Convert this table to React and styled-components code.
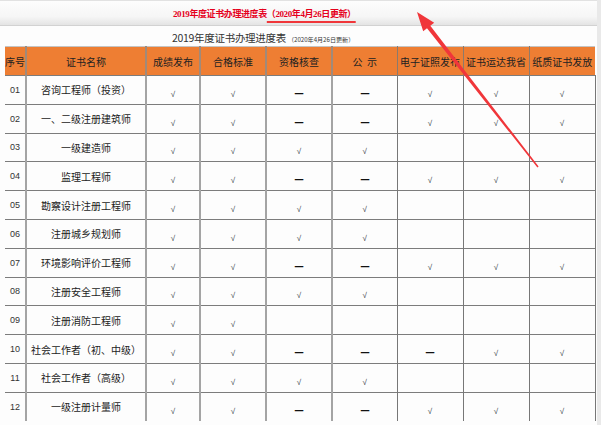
import React from 'react'
import styled, { createGlobalStyle } from 'styled-components'

const GlobalStyle = createGlobalStyle`
  html, body {
    margin: 0;
    padding: 0;
    background: #fff;
  }
  body {
    font-family: "Noto Sans CJK SC", "Liberation Sans", sans-serif;
  }
`

const HEADERS = ['序号', '证书名称', '成绩发布', '合格标准', '资格核查', '公  示', '电子证照发布', '证书运达我省', '纸质证书发放']
const WIDTHS = [21, 120, 54, 66, 66, 65, 66, 66, 66]

const ROWS = [
  ['01', '咨询工程师（投资）', 'v', 'v', '-', '-', 'v', 'v', 'v'],
  ['02', '一、二级注册建筑师', 'v', 'v', '-', '-', 'v', 'v', 'v'],
  ['03', '一级建造师', 'v', 'v', 'v', 'v', '', '', ''],
  ['04', '监理工程师', 'v', 'v', '-', '-', 'v', 'v', 'v'],
  ['05', '勘察设计注册工程师', 'v', 'v', 'v', 'v', '', '', ''],
  ['06', '注册城乡规划师', 'v', 'v', 'v', 'v', '', '', ''],
  ['07', '环境影响评价工程师', 'v', 'v', '-', '-', 'v', 'v', 'v'],
  ['08', '注册安全工程师', 'v', 'v', 'v', 'v', '', '', ''],
  ['09', '注册消防工程师', 'v', 'v', '', '', '', '', ''],
  ['10', '社会工作者（初、中级）', 'v', 'v', '-', '-', '-', 'v', 'v'],
  ['11', '社会工作者（高级）', 'v', 'v', 'v', 'v', '', '', ''],
  ['12', '一级注册计量师', 'v', 'v', '-', '-', 'v', 'v', 'v'],
]

// tapered annotation arrow, tail -> tip
const arrowPoints = (() => {
  const tip = [417, 12]
  const tail = [538, 167]
  const dx = tip[0] - tail[0]
  const dy = tip[1] - tail[1]
  const len = Math.hypot(dx, dy)
  const u = [dx / len, dy / len]
  const n = [-u[1], u[0]]
  const headLen = 19
  const headHalf = 7
  const base = [tip[0] - u[0] * headLen, tip[1] - u[1] * headLen]
  const p = (c, k) => `${(c[0] + n[0] * k).toFixed(1)},${(c[1] + n[1] * k).toFixed(1)}`
  return [
    p(tail, 0.7),
    p(base, 2.1),
    p(base, headHalf),
    `${tip[0]},${tip[1]}`,
    p(base, -headHalf),
    p(base, -2.1),
    p(tail, -0.7),
  ].join(' ')
})()

const Cell = ({ value }) => {
  if (value === 'v') return <Check>√</Check>
  if (value === '-') return <Dash>—</Dash>
  return null
}

export default function App() {
  return (
    <>
      <GlobalStyle />
      <Page>
        <TopBar>
          <Title>
            2019年度证书办理进度表<Updated>（2020年4月26日更新）</Updated>
          </Title>
        </TopBar>
        <Main>
          <Caption>
            <CaptionText>2019年度证书办理进度表</CaptionText>
            <CaptionNote>（2020年4月26日更新）</CaptionNote>
          </Caption>
          <Table>
            <colgroup>
              {WIDTHS.map((w, i) => (
                <col key={i} style={{ width: w }} />
              ))}
            </colgroup>
            <thead>
              <tr>
                {HEADERS.map((h) => (
                  <Th key={h}>{h}</Th>
                ))}
              </tr>
            </thead>
            <tbody>
              {ROWS.map((r) => (
                <Row key={r[0]}>
                  <NumCell>{r[0]}</NumCell>
                  <NameCell>{r[1]}</NameCell>
                  {r.slice(2).map((v, i) => (
                    <Td key={i}>
                      <Cell value={v} />
                    </Td>
                  ))}
                </Row>
              ))}
            </tbody>
          </Table>
        </Main>
        <Arrow viewBox="0 0 601 425" width="601" height="425">
          <polygon points={arrowPoints} fill="#f0363a" />
        </Arrow>
      </Page>
    </>
  )
}

const Page = styled.div`
  position: relative;
  width: 601px;
  height: 425px;
  overflow: hidden;
  background: #fdfdfd;
  box-sizing: border-box;
  border-right: 4px solid #e9e9e9;
`

const TopBar = styled.div`
  height: 24px;
  display: flex;
  align-items: center;
  padding-left: 173px;
  border-top: 1px solid #e2e2e2;
  border-bottom: 1px solid #d2d2d2;
  background: linear-gradient(#fdfdfd, #f6f6f6 65%, #e4e4e4);
`

const Title = styled.div`
  font-family: "Liberation Serif", "Noto Sans CJK SC", serif;
  font-weight: 700;
  font-size: 9px;
  color: #e5001c;
  white-space: nowrap;
  letter-spacing: -0.4px;
  margin-top: 1px;
`

const Updated = styled.span`
  text-decoration: underline;
  text-decoration-color: #f0363a;
  text-decoration-thickness: 2px;
  text-underline-offset: 4px;
`

const Main = styled.div`
  padding: 0 0 0 5px;
`

const Caption = styled.div`
  height: 20px;
  display: flex;
  align-items: flex-end;
  padding-left: 167px;
  box-sizing: border-box;
  padding-bottom: 1px;
  white-space: nowrap;
`

const CaptionText = styled.span`
  font-size: 10.5px;
  color: #333;
  letter-spacing: -0.3px;
`

const CaptionNote = styled.span`
  font-size: 6.1px;
  color: #333;
  margin-left: 2px;
  margin-bottom: 1px;
`

const Table = styled.table`
  width: 590px;
  table-layout: fixed;
  border-collapse: collapse;
  border-top: 1px solid #c4c4c4;
`

const Th = styled.th`
  height: 28px;
  padding: 0;
  background: #ee7e33;
  color: #222;
  font-size: 10px;
  font-weight: 400;
  white-space: pre;
  overflow: visible;
  text-align: center;
  border-left: 2px solid #a08a7a;
  &:first-child {
    border-left: none;
  }
  &:nth-child(n + 7) {
    border-left: 1px solid #8c7a6c;
  }
`

const Row = styled.tr`
  height: 28.8px;
`

const Td = styled.td`
  padding: 0;
  text-align: center;
  border-top: 1px solid #7c7c7c;
  border-left: 2px solid #a4a4a4;
  &:nth-child(n + 7) {
    border-left: 1px solid #777;
  }
  &:last-child {
    border-right: 1px solid #777;
  }
`

const NumCell = styled(Td)`
  font-family: "Liberation Sans", sans-serif;
  font-size: 9px;
  color: #333;
  border-left: none;
`

const NameCell = styled(Td)`
  font-size: 10px;
  color: #222;
  white-space: nowrap;
`

const Check = styled.span`
  font-family: "Liberation Sans", sans-serif;
  font-size: 8px;
  color: #2c3340;
`

const Dash = styled.span`
  display: inline-block;
  font-family: "Noto Sans CJK SC", sans-serif;
  font-size: 11px;
  font-weight: 900;
  color: #111;
  transform: scaleX(0.95);
`

const Arrow = styled.svg`
  position: absolute;
  top: 0;
  left: 0;
  pointer-events: none;
`
